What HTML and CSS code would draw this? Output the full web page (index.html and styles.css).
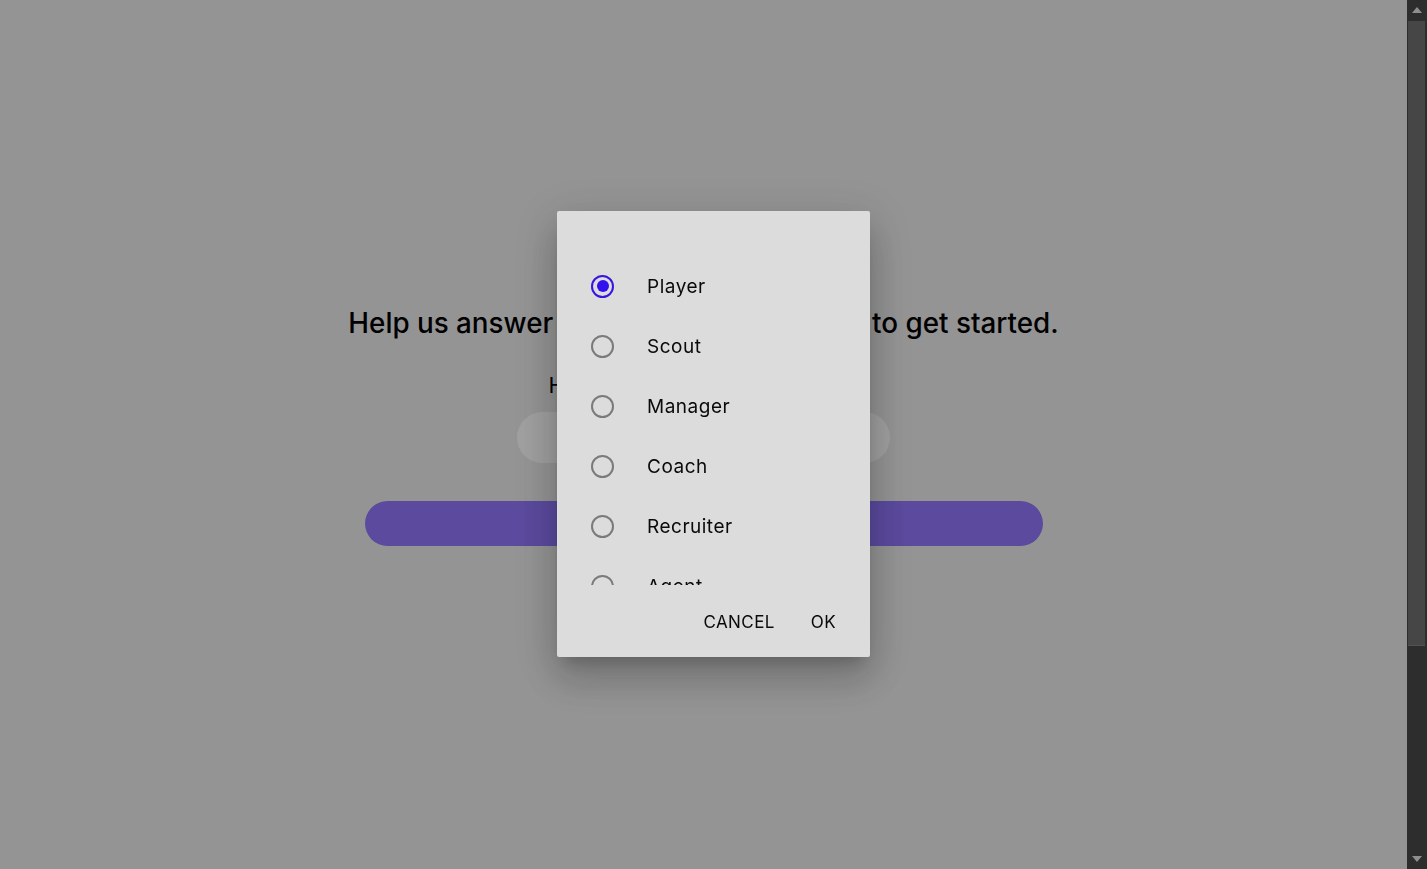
FILE: index.html
```html
<!DOCTYPE html>
<html lang="en">
<head>
<meta charset="utf-8">
<title>Get started</title>
<link rel="stylesheet" href="styles.css">
</head>
<body>
<div class="app">
  <main class="page">
    <h1 class="headline">Help us answer a few simple questions to get started.</h1>
    <p class="question">How do you identify yourself?</p>
    <div class="select-pill"></div>
    <button class="continue-btn" type="button"></button>
  </main>

  <aside class="scrollbar" aria-hidden="true">
    <span class="sb-arrow">
      <svg width="10" height="6" viewBox="0 0 10 6"><path d="M0 6 L5 0 L10 6 Z" fill="#8e8e8e"/></svg>
    </span>
    <span class="sb-track"><span class="sb-thumb"></span></span>
    <span class="sb-arrow">
      <svg width="10" height="6" viewBox="0 0 10 6"><path d="M0 0 L10 0 L5 6 Z" fill="#8e8e8e"/></svg>
    </span>
  </aside>
</div>

<div class="overlay">
  <div class="dialog" role="dialog">
    <div class="options">
      <label class="option">
        <span class="radio checked"><span class="dot"></span></span>
        <span class="option-label">Player</span>
      </label>
      <label class="option">
        <span class="radio"></span>
        <span class="option-label">Scout</span>
      </label>
      <label class="option">
        <span class="radio"></span>
        <span class="option-label">Manager</span>
      </label>
      <label class="option">
        <span class="radio"></span>
        <span class="option-label">Coach</span>
      </label>
      <label class="option">
        <span class="radio"></span>
        <span class="option-label">Recruiter</span>
      </label>
      <label class="option">
        <span class="radio"></span>
        <span class="option-label">Agent</span>
      </label>
      <label class="option">
        <span class="radio"></span>
        <span class="option-label">Parent</span>
      </label>
    </div>
    <div class="actions">
      <button class="action" type="button">CANCEL</button>
      <button class="action" type="button">OK</button>
    </div>
  </div>
</div>
</body>
</html>
```

FILE: styles.css
```css
html,
body {
  margin: 0;
  height: 100%;
  overflow: hidden;
}

body {
  font-family: "Inter", "Noto Sans", sans-serif;
  color: #000;
  background: #ebebeb;
}

.app {
  display: flex;
  height: 100vh;
}

.page {
  flex: 1;
  padding-top: 306px;
  display: flex;
  flex-direction: column;
  align-items: center;
  box-sizing: border-box;
}

.headline {
  margin: 0;
  font-size: 27.8px;
  font-weight: 500;
  line-height: 34px;
  letter-spacing: 0;
  white-space: nowrap;
}

.question {
  margin: 32px 0 0;
  font-size: 22px;
  line-height: 26px;
}

.select-pill {
  margin-top: 14px;
  width: 373px;
  height: 51px;
  border-radius: 26px;
  background: #fdfdfd;
}

.continue-btn {
  margin-top: 38px;
  width: 678px;
  height: 45px;
  border: 0;
  border-radius: 23px;
  background: #9176fb;
}

/* fake window scrollbar */
.scrollbar {
  position: relative;
  z-index: 20;
  width: 20px;
  flex: none;
  background: #2d2d2d;
  display: flex;
  flex-direction: column;
}

.sb-arrow {
  height: 20px;
  flex: none;
  display: flex;
  align-items: center;
  justify-content: center;
}

.sb-track {
  flex: 1;
  display: flex;
  flex-direction: column;
  padding: 1px 2px 0 1px;
}

.sb-thumb {
  height: 624px;
  background: #464646;
  border-bottom: 1px solid #525252;
}

.overlay {
  position: fixed;
  z-index: 10;
  top: 0;
  left: 0;
  width: 100vw;
  height: 100vh;
  box-sizing: border-box;
  padding-top: 211px;
  background: rgba(0, 0, 0, 0.37);
  display: flex;
  align-items: flex-start;
  justify-content: center;
}

.dialog {
  width: 313px;
  height: 446px;
  box-sizing: border-box;
  padding-top: 45px;
  background: #dcdcdc;
  border-radius: 2px;
  box-shadow: 0 11px 15px -7px rgba(0, 0, 0, 0.2), 0 24px 38px 3px rgba(0, 0, 0, 0.14), 0 9px 46px 8px rgba(0, 0, 0, 0.12);
  display: flex;
  flex-direction: column;
}

.options {
  height: 329px;
  overflow: hidden;
  flex: none;
}

.option {
  height: 60px;
  display: flex;
  align-items: center;
  padding-left: 34px;
}

.radio {
  width: 19px;
  height: 19px;
  border: 2px solid #7a7a7a;
  border-radius: 50%;
  display: flex;
  align-items: center;
  justify-content: center;
  flex: none;
}

.radio.checked {
  border-color: #3914e0;
}

.dot {
  width: 12px;
  height: 12px;
  border-radius: 50%;
  background: #3311ee;
}

.option-label {
  margin-left: 33px;
  font-size: 19px;
  letter-spacing: 0.5px;
  color: #0a0a0a;
}

.actions {
  flex: 1;
  display: flex;
  justify-content: flex-end;
  align-items: center;
  gap: 36px;
  padding: 2px 34px 0 0;
}

.action {
  border: 0;
  padding: 0;
  background: none;
  font-family: "Inter", "Noto Sans", sans-serif;
  font-size: 17px;
  letter-spacing: 0.4px;
  color: #0a0a0a;
}
```
